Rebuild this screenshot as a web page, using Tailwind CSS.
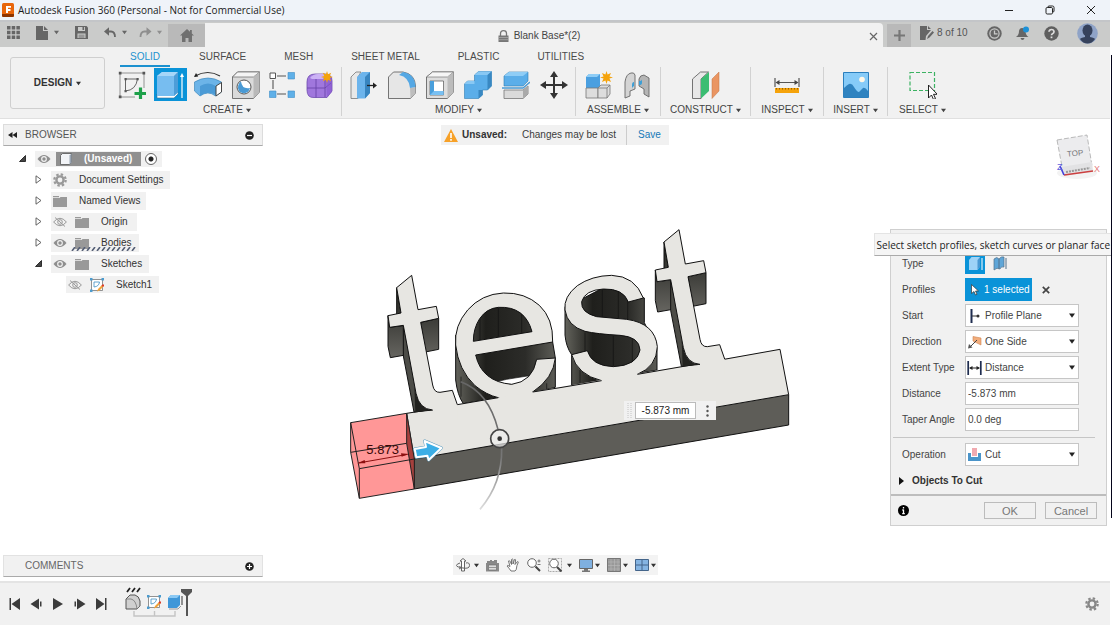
<!DOCTYPE html>
<html lang="en">
<head>
    <meta charset="UTF-8">
    <meta name="viewport" content="width=device-width, initial-scale=1.0">
    <title>Autodesk Fusion 360</title>
    <script src="https://cdn.jsdelivr.net/npm/@tailwindcss/browser@4"></script>
</head>
<body class="relative flex flex-col h-screen overflow-hidden bg-white pr-[2px] font-['Liberation_Sans',Arial,sans-serif] text-[10px] leading-3 text-[#3c3c3c]">

    <!-- Shared icons -->
    <svg class="hidden">
        <symbol id="caret" viewBox="0 0 6 5"><path d="M0 .5h6L3 4.700z" fill="currentColor"/></symbol>
        <symbol id="folder" viewBox="0 0 14 12"><path d="M0 1h6v1.200H0zM0 3h6.500l1-1H14v10H0z" fill="#999"/></symbol>
        <symbol id="eye" viewBox="0 0 14 10"><path d="M.5 5Q7-3 13.500 5 7 13 .5 5z" fill="#8e8e8e"/><circle cx="7" cy="5" r="2.900" fill="#f1f1f1"/><circle cx="7" cy="5" r="1.700" fill="#8e8e8e"/></symbol>
        <symbol id="eye-off" viewBox="0 0 14 10"><path d="M.6 5Q7-2.500 13.400 5 7 12.500.6 5z" fill="none" stroke="#999"/><circle cx="7" cy="5" r="2.300" fill="none" stroke="#999"/><path d="M2 .5l10 9" stroke="#999"/></symbol>
        <symbol id="closed" viewBox="0 0 7 9"><path d="M1 .8v7.400l5-3.700z" fill="#fff" stroke="#555" stroke-width=".9"/></symbol>
        <symbol id="opened" viewBox="0 0 7 7"><path d="M6.500.5v6h-6z" fill="#444" stroke="#111" stroke-width=".8"/></symbol>
        <symbol id="gear" viewBox="0 0 14 14"><circle cx="7" cy="7" r="5.700" fill="none" stroke="currentColor" stroke-width="2.200" stroke-dasharray="2.400 2.077"/><circle cx="7" cy="7" r="3.600" fill="none" stroke="currentColor" stroke-width="2.400"/></symbol>
        <symbol id="star" viewBox="0 0 12 12"><path d="M6 0l1 3.300L10.200 1.800 8.700 5 12 6 8.700 7l1.500 3.200L7 8.700 6 12 5 8.700 1.800 10.200 3.300 7 0 6l3.300-1L1.800 1.800 5 3.300z" fill="#f5a30b"/></symbol>
        <symbol id="sketch" viewBox="0 0 14 14"><path d="M1.500 1.500h11v11h-11z" fill="#fff" stroke="#777" stroke-width=".8"/><path d="M4 4h5.500Q9 8.500 4 9z" fill="none" stroke="#3c8fc5" stroke-width=".8"/><path d="M0 0h2.500v2.500H0zM11.500 0H14v2.500h-2.500zM0 11.500h2.500V14H0z" fill="#4c9ccf"/><path d="M7 13.500l1-2.500 4-4 1.500 1.500-4 4z" fill="#f1a33b"/><path d="M11.500 7.500L13 6l1.500 1.500L13 9z" fill="#d93a2b"/></symbol>
    </svg>

    <!-- Title bar -->
    <header class="flex items-center h-5 shrink-0 bg-[#eff3f9] pl-[2px] pr-[14px]">
        <svg class="w-3 h-[14px]" viewBox="0 0 12 14"><rect width="12" height="14" rx="1.500" fill="#e8660c"/><path d="M0 11h12v1.500Q12 14 10.500 14h-9Q0 14 0 12.500z" fill="#8d3400"/><path d="M4 10V3h5v1.800H6v1.300h2.500v1.800H6V10z" fill="#fff"/></svg>
        <h1 class="ml-1 font-['Open_Sans','Noto_Sans',sans-serif] text-[10px] text-[#1a1a1a] whitespace-nowrap">Autodesk Fusion 360 (Personal - Not for Commercial Use)</h1>
        <div class="ml-auto flex items-center gap-[31px] text-[#222]">
            <button aria-label="Minimize"><svg class="w-[10px] h-[10px]" viewBox="0 0 10 10"><path d="M1 5.500h8" stroke="currentColor"/></svg></button>
            <button aria-label="Restore"><svg class="w-[10px] h-[10px]" viewBox="0 0 10 10" fill="none" stroke="currentColor"><rect x="1" y="2.500" width="6.500" height="6.500" rx="1.200"/><path d="M3 2.500V2Q3 1 4 1h3.500Q9 1 9 2.500V6Q9 7 8 7"/></svg></button>
            <button aria-label="Close"><svg class="w-[10px] h-[10px]" viewBox="0 0 10 10"><path d="M1 1l8 8M9 1L1 9" stroke="currentColor"/></svg></button>
        </div>
    </header>

    <!-- Quick access and document tabs -->
    <div class="flex items-end h-[27px] shrink-0 bg-[#cacbca] border-t-2 border-[#c3c5c8] text-[#666]">
        <div class="flex items-center h-[25px] w-[168px] pl-[7px] pb-1">
            <button aria-label="Data panel"><svg class="w-[13px] h-[13px]" viewBox="0 0 13 13" fill="currentColor"><path d="M0 0h3.500v3.500H0zM4.700 0h3.500v3.500H4.700zM9.400 0h3.500v3.500H9.400zM0 4.700h3.500v3.500H0zM4.700 4.700h3.500v3.500H4.700zM9.400 4.700h3.500v3.500H9.400zM0 9.400h3.500v3.500H0zM4.700 9.400h3.500v3.500H4.700zM9.400 9.400h3.500v3.500H9.400z"/></svg></button>
            <button class="ml-4 flex items-center gap-[6px]" aria-label="File"><svg class="w-[12px] h-[14px]" viewBox="0 0 12 14"><path d="M0 0h7v5h5v9H0zM8 0l4 4H8z" fill="currentColor"/></svg><svg class="w-[5px] h-[5px]"><use href="#caret"/></svg></button>
            <button class="ml-4" aria-label="Save"><svg class="w-[13px] h-[13px]" viewBox="0 0 13 13"><path d="M0 0h11.500L13 1.500V13H0z" fill="currentColor"/><path d="M3 1h7v4H3zM2.500 7.500h8V12h-8z" fill="#cacbca"/><path d="M7.500 1h1.600v3H7.500zM3.500 8.700h6v.9h-6zM3.500 10.500h6v.9h-6z" fill="currentColor"/></svg></button>
            <button class="ml-4 flex items-center gap-[5px]" aria-label="Undo"><svg class="w-[13px] h-[11px]" viewBox="0 0 13 11"><path d="M0 4.500L5 .3v8.400z" fill="currentColor"/><path d="M4 4.500h3q4 .2 4 5.500" fill="none" stroke="currentColor" stroke-width="1.800"/></svg><svg class="w-[5px] h-[5px]"><use href="#caret"/></svg></button>
            <button class="ml-3 flex items-center gap-[5px] text-[#8f8f8f]" aria-label="Redo"><svg class="w-[13px] h-[11px]" viewBox="0 0 13 11"><path d="M12.500 4.500l-5-4.200v8.400z" fill="currentColor"/><path d="M8.500 4.500h-3q-4 .2-4 5.500" fill="none" stroke="currentColor" stroke-width="1.800"/></svg><svg class="w-[5px] h-[5px]"><use href="#caret"/></svg></button>
        </div>
        <button class="flex items-center justify-center w-[37px] h-[23px] bg-[#b9b9b9]" aria-label="Home"><svg class="w-[14px] h-[13px]" viewBox="0 0 14 13"><path d="M0 6.500L7 0l3 2.800V1h1.800v3.500L14 6.500H12V13H8.500V9h-3v4H2V6.500z" fill="#707070"/></svg></button>
        <div class="flex flex-1 items-center h-6 rounded-tr-sm bg-[#f1f1f1] pl-1 pr-[5px] pt-[2px]">
            <div class="flex flex-1 items-center justify-center gap-[5px] text-[#444]">
                <svg class="w-[11px] h-[12px]" viewBox="0 0 11 12"><path d="M2.500 6V3.500q0-2.800 3-2.800t3 2.800V6" fill="none" stroke="#777" stroke-width="1.300"/><path d="M.5 5.500h10V12H.5z" fill="#777"/><path d="M1 7.500h9M1 9.700h9" stroke="#aaa" stroke-width=".8"/></svg>
                <span>Blank Base*(2)</span>
            </div>
            <button aria-label="Close tab"><svg class="w-[9px] h-[9px]" viewBox="0 0 9 9"><path d="M1 1l7 7M8 1L1 8" stroke="#666" stroke-width="1.200"/></svg></button>
        </div>
        <button class="ml-1 flex items-center justify-center w-6 h-[23px] bg-[#b9b9b9]" aria-label="New tab"><svg class="w-[11px] h-[11px]" viewBox="0 0 11 11"><path d="M5.500 0v11M0 5.500h11" stroke="#777" stroke-width="2.200"/></svg></button>
        <div class="flex items-center h-[25px] w-[199px] pl-[9px] pr-3 pb-[3px]">
            <svg class="w-[14px] h-[14px]" viewBox="0 0 14 14"><path d="M0 0h7v4h4L6 10l-.5 4H0z" fill="currentColor"/><path d="M8 0l3 3H8zM7 13l1-3 4.500-5L14 6.500l-4.500 5z" fill="currentColor"/></svg>
            <span class="ml-[3px] text-[#555]">8 of 10</span>
            <div class="ml-auto flex items-center gap-[14px]">
                <button aria-label="Job status"><svg class="w-[15px] h-[15px]" viewBox="0 0 15 15"><circle cx="7.500" cy="7.500" r="7.200" fill="#666"/><circle cx="7.500" cy="7.500" r="4.600" fill="none" stroke="#cacbca" stroke-width="1.200"/><path d="M7.500 4.500v3.300h3" stroke="#cacbca" stroke-width="1.300" fill="none"/></svg></button>
                <button aria-label="Notifications"><svg class="w-[14px] h-[15px]" viewBox="0 0 14 15"><path d="M0 11q3-2 3-6Q3.500 2 6 2q3 0 3.500 3 0 4 3 6zM4.500 12h4q-.5 2-2 2t-2-2z" fill="#666"/><circle cx="10" cy="3.500" r="3" fill="#1c91d8"/></svg></button>
                <button aria-label="Help"><svg class="w-[15px] h-[15px]" viewBox="0 0 15 15"><circle cx="7.500" cy="7.500" r="7.200" fill="#5f5f5f"/><path d="M5 5.800Q5.200 3.500 7.500 3.500T10 5.700Q10 7 8.500 7.700q-1 .5-1 1.600" fill="none" stroke="#dcdcdc" stroke-width="1.700"/><path d="M6.600 10.500h1.800v1.700H6.600z" fill="#dcdcdc"/></svg></button>
                <button class="ml-1" aria-label="Account"><svg class="w-[21px] h-[21px]" viewBox="0 0 21 21"><circle cx="10.500" cy="10.500" r="10.300" fill="#8fa3c7"/><ellipse cx="10.500" cy="7.500" rx="5" ry="6" fill="#36425c"/><path d="M8 11h5v3q4.500.8 5 2-3 4.500-7.500 4.500T3 16q.5-1.200 5-2z" fill="#36425c"/></svg></button>
            </div>
        </div>
    </div>

    <!-- Ribbon -->
    <div class="flex h-[72px] shrink-0 bg-[#f1f1f1] border-b border-[#e0e0e0]">
        <button class="ml-[10px] mt-[10px] flex items-center justify-center gap-1 w-[95px] h-[52px] rounded-[3px] border border-[#cfcfcf] font-bold text-[#333]">DESIGN <svg class="w-[5px] h-[5px]"><use href="#caret"/></svg></button>
        <div class="ml-[8px] flex flex-col flex-1">
            <nav class="ml-[7px] flex gap-5 h-[20px] text-[#4a4a4a] whitespace-nowrap">
                <a href="#" class="px-[10px] pt-1 border-b-[2px] border-[#1c91cf] text-[#1c91cf]">SOLID</a>
                <a href="#" class="px-[9px] pt-1">SURFACE</a>
                <a href="#" class="px-[9px] pt-1">MESH</a>
                <a href="#" class="px-[9px] pt-1">SHEET METAL</a>
                <a href="#" class="px-[9px] pt-1">PLASTIC</a>
                <a href="#" class="px-[9px] pt-1">UTILITIES</a>
            </nav>
            <div class="flex text-[#444]">
                <section class="flex flex-col items-center gap-[2px] w-[229px] border-r border-[#d2d2d2]">
                    <div class="flex h-[35px] items-center">
                        <button class="flex justify-center w-[38px]" aria-label="Create sketch"><svg class="w-7 h-7" viewBox="0 0 28 28"><path d="M2 2h24v24H2z" fill="none" stroke="#888" stroke-width=".9"/><path d="M7.500 8h12Q18 19 7.500 20z" fill="none" stroke="#555" stroke-width=".9"/><path d="M.8.800h2.700v2.700H.8zM24.500.800h2.700v2.700h-2.700zM.8 24.500h2.700v2.700H.8zM6.500 7h2.200v2.200H6.500zM18.500 7h2.200v2.200h-2.200zM6.500 19h2.200v2.200H6.500z" fill="#555"/><path d="M17 17h11v11H17z" fill="#f1f1f1"/><path d="M22.500 16.500v12M16.500 22.500h12" stroke="#1ea04a" stroke-width="3.200"/></svg></button>
                        <button class="flex items-center justify-center w-[38px]" aria-label="Extrude"><span class="flex items-center justify-center w-[33px] h-[33px] bg-[#0a93d8]"><svg class="w-7 h-7" viewBox="0 0 28 28"><path d="M1 23v4h17l4-4v-2l-4 3H1z" fill="#fff" stroke="#3d6f96" stroke-width=".6"/><path d="M1 5l5-4h16v20l-4 4H1z" fill="#77bdf0"/><path d="M1 5l5-4h16l-4 4z" fill="#a6d6f8"/><path d="M18 5l4-4v20l-4 4z" fill="#4d9dd8"/><path d="M26 27V4" stroke="#fff" stroke-width="1.200"/><path d="M24 6l2-4 2 4z" fill="#fff"/></svg></span></button>
                        <button class="flex justify-center w-[38px]" aria-label="Revolve"><svg class="w-7 h-7" viewBox="0 0 28 28"><path d="M1 5Q14-2 26 5" fill="none" stroke="#333" stroke-width="1.200"/><path d="M0 6l2-4 2.200 3.500z" fill="#222"/><path d="M.500 11Q14 3 27.500 11v10l-6 4Q14 19 6 25L.5 20z" fill="#6cb4e8" stroke="#2f7db3" stroke-width=".6"/><path d="M6 15Q14 10 22 15v9Q14 19 6 25z" fill="#4b9bd6"/><path d="M22 15l5.500-3.500V21L22 25z" fill="#fff" stroke="#444"/></svg></button>
                        <button class="flex justify-center w-[38px]" aria-label="Hole"><svg class="w-7 h-7" viewBox="0 0 28 28"><path d="M.5 6l5-5h22v20l-6 6.500H.5z" fill="#dadada" stroke="#666" stroke-width=".9"/><path d="M.5 6l5-5h22l-6 5z" fill="#f4f4f4" stroke="#666" stroke-width=".7"/><path d="M21.500 6l6-5v20l-6 6.500z" fill="#b9b9b9"/><circle cx="12" cy="16" r="7" fill="#fff" stroke="#555"/><path d="M9 10.500q1 8 9 6.500-1 5-6 5.200Q6.500 22 6 17q0-5 3-6.500z" fill="#4a9ad4"/></svg></button>
                        <button class="flex justify-center w-[38px] pr-1" aria-label="Pattern"><svg class="w-7 h-7" viewBox="0 0 28 28"><path d="M9 5h9M5 9v9M9 23h9" fill="none" stroke="#555" stroke-width="1.100"/><path d="M2 2h5.500v5.500H2z" fill="#fff" stroke="#555"/><path d="M20 1.500h6.500V8H20zM1.500 20H8v6.500H1.500zM20 20h6.500v6.500H20z" fill="#5fb0e8" stroke="#3f8fc8" stroke-width=".6"/></svg></button>
                        <button class="flex justify-center w-[38px] pr-1" aria-label="Create form"><svg class="w-7 h-7" viewBox="0 0 28 28"><path d="M1 11Q1 3 9 3h10q7 0 7 7v10l-5 6.500H8Q1 27 1 19z" fill="#a077dd" stroke="#6f4cae" stroke-width=".8"/><path d="M4 7q3-4 8-4h8l-3 5H6z" fill="#ccb2f5"/><path d="M10 8v18.500M1 17h18l6-5M19 8v18" fill="none" stroke="#6b46ab" stroke-width=".9"/><path d="M20 9l6-3v15l-5 5z" fill="#8657cf" opacity=".6"/><use href="#star" x="15" y="0" width="12" height="12"/></svg></button>
                    </div>
                    <button class="flex items-center gap-[3px]">CREATE <svg class="w-[5px] h-[5px]"><use href="#caret"/></svg></button>
                </section>
                <section class="flex flex-col items-center gap-[2px] w-[234px] border-r border-[#d2d2d2]">
                    <div class="flex h-[35px] items-center">
                        <button class="flex justify-center w-[38px]" aria-label="Press pull"><svg class="w-7 h-7" viewBox="0 0 28 28"><path d="M1 6l5-5h5L8 6v21.500H1z" fill="#e8e8e8" stroke="#777" stroke-width=".8"/><path d="M7 6l5-5h8v21l-5 5.500H7z" fill="#6cb4ec"/><path d="M15 6l5-5v21l-5 5.500z" fill="#3885c0"/><path d="M17 14.500h8" stroke="#222" stroke-width="1.300"/><path d="M23 11.500l4 3-4 3z" fill="#222"/></svg></button>
                        <button class="flex justify-center w-[38px]" aria-label="Fillet"><svg class="w-7 h-7" viewBox="0 0 28 28"><path d="M.5 27.500V6l5-5H15q12 2 12.500 14v7l-5 5.500z" fill="#e6e6e6" stroke="#666" stroke-width=".9"/><path d="M22 17l5.500-1v6l-5 5.500z" fill="#bdbdbd"/><path d="M11 4l4-3q12 2 12.500 15L22 17Q21 6 11 4z" fill="#55a8e4"/></svg></button>
                        <button class="flex justify-center w-[38px]" aria-label="Shell"><svg class="w-7 h-7" viewBox="0 0 28 28"><path d="M.5 6l6-5h21v20l-6 6.500H.5z" fill="#ddd" stroke="#666" stroke-width=".9"/><path d="M.5 6l6-5h21l-6 5z" fill="#f6f6f6" stroke="#666" stroke-width=".6"/><path d="M21.500 6l6-5v20l-6 6.500z" fill="#bcbcbc"/><path d="M4 10h13.500v14H4z" fill="#fff" stroke="#555" stroke-width=".7"/><path d="M4 10h4v10h9.500v4H4z" fill="#4a9fdc"/><path d="M4 24l4-4h9.500v4z" fill="#79c0f2"/></svg></button>
                        <button class="flex justify-center w-[38px]" aria-label="Combine"><svg class="w-7 h-7" viewBox="0 0 28 28"><path d="M.5 13l3-3h7V4l4-3.500h13V15l-4 4h-5v5l-4 3.500H.5z" fill="#5baee9" stroke="#2f7db3" stroke-width=".6"/><path d="M10.500 4l4-3.500h13l-4 3.500zM.500 13l3-3h7v3z" fill="#88c8f4"/><path d="M23.500 4l4-3.500V15l-4 4zM14.500 19h4v5l-4 3.500z" fill="#3988c2"/></svg></button>
                        <button class="flex justify-center w-[38px]" aria-label="Split body"><svg class="w-7 h-7" viewBox="0 0 28 28"><path d="M2 5l5-4h19v9l-5 5H2z" fill="#5baee9" stroke="#2f7db3" stroke-width=".6"/><path d="M2 5l5-4h19l-5 4z" fill="#8fcdf6"/><path d="M0 17h21l7-6" fill="none" stroke="#4a9ad4" stroke-width="1.400"/><path d="M2 19h19l5-4v8l-5 4.500H2z" fill="#dadada" stroke="#777" stroke-width=".8"/><path d="M21 19l5-4v8l-5 4.500z" fill="#aaa"/></svg></button>
                        <button class="flex justify-center w-[38px]" aria-label="Move"><svg class="w-7 h-7" viewBox="0 0 28 28"><path d="M14 4v20M4 14h20" stroke="#333" stroke-width="2"/><path d="M14 0l4 6h-8zM14 28l4-6h-8zM0 14l6-4v8zM28 14l-6-4v8z" fill="#333"/></svg></button>
                    </div>
                    <button class="flex items-center gap-[3px]">MODIFY <svg class="w-[5px] h-[5px]"><use href="#caret"/></svg></button>
                </section>
                <section class="flex flex-col items-center gap-[2px] w-[85px] border-r border-[#d2d2d2]">
                    <div class="flex h-[35px] items-center">
                        <button class="flex justify-center w-[38px]" aria-label="New component"><svg class="w-7 h-7" viewBox="0 0 28 28"><path d="M1 6l3-3h11v12l-3 3H1z" fill="#4a9fe0"/><path d="M1 6l3-3h11l-3 3z" fill="#8fcdf6"/><path d="M1 17h12v10H1z" fill="#ddd" stroke="#777" stroke-width=".8"/><path d="M13 17l3-3h9v9l-3 4h-9z" fill="#ddd" stroke="#777" stroke-width=".8"/><path d="M13 17h9v10M22 17l3-3" fill="none" stroke="#777" stroke-width=".8"/><use href="#star" x="15" y="0" width="13" height="13"/></svg></button>
                        <button class="flex justify-center w-[38px]" aria-label="Joint"><svg class="w-7 h-7" viewBox="0 0 28 28"><path d="M2 27V11Q3 3 8 2q3-1 4 2v14L7 20v5z" fill="#d4d4d4" stroke="#666" stroke-width=".9"/><path d="M16 8q1-4 5-4l5 3v19l-5-3v-5l-5-3z" fill="#b5b5b5" stroke="#666" stroke-width=".9"/><path d="M9 14q0-3 2-3v4q-2 1-2 3zM16 10q3 0 3-2v4q0 2-3 2z" fill="#3d9fd6"/></svg></button>
                    </div>
                    <button class="flex items-center gap-[3px]">ASSEMBLE <svg class="w-[5px] h-[5px]"><use href="#caret"/></svg></button>
                </section>
                <section class="flex flex-col items-center gap-[2px] w-[90px] border-r border-[#d2d2d2]">
                    <div class="flex h-[35px] items-center">
                        <button aria-label="Offset plane"><svg class="w-7 h-7" viewBox="0 0 28 28"><path d="M.5 8l8-7h8L9 8v19.500H.5z" fill="#e8e8e8" stroke="#666" stroke-width=".9"/><path d="M9 8l8-7v19l-8 7.500z" fill="#3bbd72"/><path d="M20 8l7-7v19l-7 7.500z" fill="#ea9562" stroke="#c27546" stroke-width=".5"/></svg></button>
                    </div>
                    <button class="flex items-center gap-[3px]">CONSTRUCT <svg class="w-[5px] h-[5px]"><use href="#caret"/></svg></button>
                </section>
                <section class="flex flex-col items-center gap-[2px] w-[73px] border-r border-[#d2d2d2]">
                    <div class="flex h-[35px] items-center">
                        <button aria-label="Measure"><svg class="w-7 h-7" viewBox="0 0 28 28"><path d="M2 7v9M26 7v9M4 11.500h20" stroke="#555" stroke-width="1.200"/><path d="M2.500 11.500l4-2.500v5zM25.500 11.500l-4-2.500v5z" fill="#444"/><path d="M2 17h24v5H2z" fill="#f5a30b"/><path d="M3 17.700h23" stroke="#9a6200" stroke-width="1.500" stroke-dasharray="1 2"/></svg></button>
                    </div>
                    <button class="flex items-center gap-[3px]">INSPECT <svg class="w-[5px] h-[5px]"><use href="#caret"/></svg></button>
                </section>
                <section class="flex flex-col items-center gap-[2px] w-[64px] border-r border-[#d2d2d2]">
                    <div class="flex h-[35px] items-center">
                        <button aria-label="Insert image"><svg class="w-7 h-7" viewBox="0 0 28 28"><path d="M1.500 1.500h25v25h-25z" fill="#86cbf8" stroke="#2b7fbd"/><circle cx="20" cy="8.500" r="2.800" fill="#fff8e8"/><path d="M2 26V17Q5 14 7 13q3-1 5 3 3 5 5 5l4-4q2-1 5 3v6z" fill="#2f83c0"/></svg></button>
                    </div>
                    <button class="flex items-center gap-[3px]">INSERT <svg class="w-[5px] h-[5px]"><use href="#caret"/></svg></button>
                </section>
                <section class="flex flex-col items-center gap-[2px] w-[69px]">
                    <div class="flex h-[35px] items-center">
                        <button aria-label="Select"><svg class="w-7 h-7" viewBox="0 0 28 28"><path d="M1 1.500h24.500v18H1z" fill="none" stroke="#3bb262" stroke-width="1.200" stroke-dasharray="4 2"/><path d="M19.500 14v13l3-3 2 4.500 2-1-2-4.200h3.800z" fill="#fff" stroke="#222"/></svg></button>
                    </div>
                    <button class="flex items-center gap-[3px]">SELECT <svg class="w-[5px] h-[5px]"><use href="#caret"/></svg></button>
                </section>
            </div>
        </div>
    </div>

    <!-- Canvas -->
    <main class="relative flex-1">
        <!-- Model -->
        <svg class="absolute left-[340px] top-[101px] w-[460px] h-[300px]" viewBox="0 0 1380 900" stroke-linejoin="round">
            <defs>
                <linearGradient id="side" x1="0" x2="0" y1="0" y2="1"><stop offset="0" stop-color="#25251f"/><stop offset=".5" stop-color="#40403c"/><stop offset="1" stop-color="#666560"/></linearGradient>
                <linearGradient id="round" x1="0" x2="1" y1="0" y2="0"><stop offset="0" stop-color="#63635c"/><stop offset=".3" stop-color="#1f1f1c"/><stop offset=".7" stop-color="#2c2c29"/><stop offset="1" stop-color="#5c5c56"/></linearGradient>
                <linearGradient id="fade" x1="0" x2="0" y1="0" y2="1"><stop offset="0" stop-color="#666"/><stop offset=".6" stop-color="#777"/><stop offset="1" stop-color="#ddd"/></linearGradient>
                <g id="letter-t">
                    <path d="M170 203l13 76-13 3zM144 287v92l7 34 45-8V316l-47 6zM242 307l54-12v93l-40 8z" fill="url(#side)" stroke="#111" stroke-width="3"/>
                    <path d="M190 316v92l32 168 56-6-40-20z" fill="#4c4c47" stroke="#111" stroke-width="3"/>
                    <path d="M223 500l3 76 52-6Q235 570 223 500z" fill="#22221f"/>
                    <path d="M352 554L337 511 300 517Q282 518 278 495L242 307 296 295 289 259 234 269 215 166 170 203 183 279 144 287 149 322 190 316 228 520Q238 568 278 570V600H352z" fill="#e7e6e2"/>
                    <path d="M352 554L337 511 300 517Q282 518 278 495L242 307 296 295 289 259 234 269 215 166 170 203 183 279 144 287 149 322 190 316 228 520Q238 568 278 570" fill="none" stroke="#111" stroke-width="3"/>
                </g>
            </defs>
            <!-- e -->
            <path d="M347 345V480Q352 525 370 551L475 533 590 516 646 502V414L638 366 600 275 490 240 400 260z" fill="url(#round)"/>
            <path d="M347 345V480Q352 525 370 551L475 533M590 516L646 502V414L638 366" fill="none" stroke="#111" stroke-width="3"/>
            <path d="M462 487L500 478 562 468 572 474Q545 498 505 493z" fill="#fff" stroke="#111" stroke-width="2"/>
            <path d="M420 275V360M475 255V350M545 265V338M363 470V530M620 490V508" stroke="#111" stroke-width="2"/>
            <path d="M638 366Q640 295 598 256 555 217 490 219 425 222 383 270 342 318 347 375 355 450 405 497 440 525 475 533L530 560 578 516Q640 475 646 414L590 418Q578 485 515 493 425 485 407 405zM400 364Q400 325 419 296 440 265 475 262 555 258 576 335z" fill="#e7e6e2" fill-rule="evenodd" stroke="#111" stroke-width="3"/>
            <!-- s -->
            <g transform="translate(660 0)">
                <path d="M15 260V345Q18 380 35 404V496L125 482 291 450V385L253 308V234L155 190 60 240z" fill="url(#round)" stroke="#111" stroke-width="3"/>
                <path d="M127 200V290M175 200V294M75 338V410M160 348V445M217 358V430M203 235V298M60 450V490" stroke="#111" stroke-width="2"/>
                <path d="M250 234Q225 168 155 166 95 167 52 197 10 230 15 270 22 318 75 334 110 342 180 346 238 350 240 390 232 437 160 440 95 438 82 392L35 404Q52 465 125 482L180 520 232 463Q290 440 292 380 285 310 200 298 155 294 110 290 62 278 65 245 75 210 130 207 190 205 205 246z" fill="#e7e6e2" stroke="#111" stroke-width="3"/>
            </g>
            <!-- bar -->
            <path d="M200 580L1320 388 1346 524 223 717z" fill="#e7e6e2"/>
            <path d="M223 717L1346 524V615L223 807z" fill="#5e5d58" stroke="#111" stroke-width="3"/>
            <path d="M200 580L278 568M352 554L475 533M578 516L660 503 785 482M892 463L1078 431M1152 418L1320 388 1346 524" fill="none" stroke="#111" stroke-width="3"/>
            <use href="#letter-t"/>
            <use href="#letter-t" x="802" y="-137"/>
            <!-- removed volume -->
            <path d="M32 608L200 580 223 717V807L58 835 32 697z" fill="#ff9797" stroke="#222" stroke-width="3"/>
            <path d="M200 580L223 717V807L200 670z" fill="#a5403d" stroke="#222" stroke-width="3"/>
            <path d="M32 608L58 746V835M58 746L223 717M32 697L200 670" fill="none" stroke="#222" stroke-width="3"/>
            <path d="M55 729L203 703" stroke="#8d1010" stroke-width="3"/>
            <path d="M52 730l22-10 2 10zM206 702l-23-2 2 10z" fill="#8d1010"/>
            <text x="79" y="701" font-size="39" fill="#3c0808">5.873</text>
            <!-- manipulators -->
            <path d="M224 687L258 681 254 663 304 684 266 720 262 707 229 712z" fill="#3caee6" stroke="#5d9cbd" stroke-width="9"/>
            <path d="M224 687L258 681 254 663 304 684 266 720 262 707 229 712z" fill="#3caee6" stroke="#fff" stroke-width="6"/>
            <path d="M362 485Q445 515 474 628M485 685Q487 790 420 868" fill="none" stroke="url(#fade)" stroke-width="5"/>
            <circle cx="479" cy="656" r="27" fill="#eee" fill-opacity=".7" stroke="#444" stroke-width="5"/>
            <circle cx="479" cy="656" r="7" fill="#333"/>
        </svg>

        <!-- Floating value input -->
        <div class="absolute left-[624px] top-[282px] flex items-center gap-[3px] h-[19px] bg-[#f1f1f1] pl-[3px]">
            <svg class="w-[5px] h-[15px]" viewBox="0 0 5 15"><path d="M1 0v15M4 0v15" stroke="#c4c4c4" stroke-dasharray="1 1"/></svg>
            <input aria-label="Distance value" class="w-[61px] h-[17px] bg-white border border-[#bbb] text-center text-[10px] text-[#222]" value="-5.873 mm">
            <button class="flex justify-center w-[17px]" aria-label="More"><svg class="w-[3px] h-[12px]" viewBox="0 0 3 12" fill="#555"><circle cx="1.500" cy="1.500" r="1.200"/><circle cx="1.500" cy="6" r="1.200"/><circle cx="1.500" cy="10.500" r="1.200"/></svg></button>
        </div>

        <!-- Browser tree -->
        <aside class="absolute left-[3px] top-[5px] w-[260px]">
            <div class="flex items-center h-[22px] bg-[#f1f1f1] border border-[#dcdcdc] border-b-[#aaa] px-1 text-[#555]">
                <svg class="w-[9px] h-[6px]" viewBox="0 0 9 6"><path d="M4.500 0v6L0 3zM9 0v6L4.500 3z" fill="#222"/></svg>
                <span class="ml-2">BROWSER</span>
                <button class="ml-auto mr-1" aria-label="Collapse"><svg class="w-[9px] h-[9px]" viewBox="0 0 9 9"><circle cx="4.500" cy="4.500" r="4.300" fill="#222"/><path d="M2 4.500h5" stroke="#fff" stroke-width="1.200"/></svg></button>
            </div>
            <ul class="mt-[2px] flex flex-col text-[#333] *:flex *:items-center *:h-[21px]">
                <li class="pl-4"><svg class="w-[7px] h-[7px]"><use href="#opened"/></svg>
                    <div class="ml-[9px] flex items-center h-4 bg-[#f1f1f1] pl-[2px] pr-[5px]"><svg class="w-[14px] h-[10px]"><use href="#eye"/></svg>
                        <span class="ml-[5px] mr-1 flex items-center w-[85px] h-[14px] bg-[#909090] pl-1 font-bold text-white"><svg class="mr-3 w-3 h-3" viewBox="0 0 12 12"><path d="M.5 2.500l2-2h9v9l-2 2h-9z" fill="#f2f4f7" stroke="#555" stroke-width=".8"/><path d="M9.500 2.500l2-2v9l-2 2z" fill="#9aa5b3"/></svg>(Unsaved)</span>
                        <input type="radio" checked aria-label="Activate component" class="appearance-none w-3 h-3 rounded-full border border-[#666] bg-[radial-gradient(circle,#222_0_2px,#fff_3px)]"></div></li>
                <li class="pl-8"><svg class="w-[7px] h-[9px]"><use href="#closed"/></svg>
                    <div class="ml-[9px] flex items-center h-[18px] bg-[#f1f1f1] pl-[2px] pr-[6px]"><svg class="mr-3 w-[14px] h-[14px] text-[#999]"><use href="#gear"/></svg>Document Settings</div></li>
                <li class="pl-8"><svg class="w-[7px] h-[9px]"><use href="#closed"/></svg>
                    <div class="ml-[9px] flex items-center h-[18px] bg-[#f1f1f1] pl-[2px] pr-[5px]"><svg class="mr-3 w-[14px] h-3"><use href="#folder"/></svg>Named Views</div></li>
                <li class="pl-8"><svg class="w-[7px] h-[9px]"><use href="#closed"/></svg>
                    <div class="ml-[9px] flex items-center h-[18px] bg-[#f1f1f1] pl-[2px] pr-[9px]"><svg class="w-[14px] h-[10px]"><use href="#eye-off"/></svg><svg class="ml-2 mr-3 w-[14px] h-3"><use href="#folder"/></svg>Origin</div></li>
                <li class="pl-8"><svg class="w-[7px] h-[9px]"><use href="#closed"/></svg>
                    <div class="relative ml-[9px] flex items-center h-[18px] bg-[#f1f1f1] pl-[2px] pr-[7px]"><svg class="w-[14px] h-[10px]"><use href="#eye"/></svg><svg class="ml-2 mr-3 w-[14px] h-3"><use href="#folder"/></svg>Bodies
                        <svg class="absolute left-5 bottom-[1px] w-[68px] h-1" viewBox="0 0 68 4"><path d="M1 4l3-4M6 4l3-4M11 4l3-4M16 4l3-4M21 4l3-4M26 4l3-4M31 4l3-4M36 4l3-4M41 4l3-4M46 4l3-4M51 4l3-4M56 4l3-4M61 4l3-4" stroke="#566077" stroke-width="1.600"/></svg></div></li>
                <li class="pl-8"><svg class="w-[7px] h-[7px]"><use href="#opened"/></svg>
                    <div class="ml-[9px] flex items-center h-[18px] bg-[#f1f1f1] pl-[2px] pr-[7px]"><svg class="w-[14px] h-[10px]"><use href="#eye"/></svg><svg class="ml-2 mr-3 w-[14px] h-3"><use href="#folder"/></svg>Sketches</div></li>
                <li class="pl-[63px]">
                    <div class="flex items-center h-[17px] bg-[#f1f1f1] pl-[2px] pr-[7px]"><svg class="w-[14px] h-[10px]"><use href="#eye-off"/></svg><svg class="ml-2 mr-3 w-[14px] h-[14px]"><use href="#sketch"/></svg>Sketch1</div></li>
            </ul>
        </aside>

        <!-- Unsaved notice -->
        <div class="absolute left-[441px] top-[6px] flex items-center h-5 bg-[#f1f1f1] pl-[3px] whitespace-nowrap">
            <svg class="w-[14px] h-[13px]" viewBox="0 0 14 13"><path d="M7 0l7 13H0z" fill="#f7a128"/><path d="M7 4v5M7 10v1.700" stroke="#fff" stroke-width="1.600"/></svg>
            <b class="ml-1 text-[#333]">Unsaved:</b>
            <span class="ml-[15px]">Changes may be lost</span>
            <a href="#" class="ml-[10px] flex items-center h-5 border-l border-[#ccc] pl-[11px] pr-[8px] text-[#1579b8]">Save</a>
        </div>

        <!-- View cube -->
        <svg class="absolute right-[9px] top-[14px] w-[46px] h-[50px]" viewBox="0 0 46 50">
            <ellipse cx="22" cy="40" rx="20" ry="6" fill="#f3f3f3"/>
            <path d="M2 7L32 2 37 33 8 39z" fill="#ececee" stroke="#aaa" stroke-width=".8" stroke-dasharray="5 2"/>
            <path d="M6 34L37 29 38 38 10 43z" fill="#e2e2e4"/>
            <path d="M11 39L35 35" stroke="#999" stroke-width="2" stroke-dasharray="2 1"/>
            <text x="12" y="23" font-size="8" fill="#77777a" transform="rotate(-6 20 20)">TOP</text>
            <path d="M9 42L38 38" stroke="#cc4040" stroke-width="1.400"/><path d="M5 33L9 42" stroke="#4141dd" stroke-width="1.600"/>
            <text x="39" y="39" font-size="9" fill="#e58080">X</text><text x="2" y="37" font-size="9" fill="#6060dd">Z</text>
        </svg>

        <!-- Extrude dialog -->
        <form class="absolute right-[3px] top-[110px] w-[217px] bg-[#f1f1f1] border border-[#cfcfcf] pt-[22px] text-[#444]">
            <div class="flex flex-col gap-[3px] pl-[11px] *:flex *:items-center *:h-[23px]">
                <div><span class="w-[63px]">Type</span>
                    <button type="button" class="flex items-center justify-center w-[20px] h-[20px] bg-[#0a93d8]" aria-label="Extrude"><svg class="w-[15px] h-[15px]" viewBox="0 0 15 15"><path d="M1 4l2.500-3H12v9.500L9.500 14H1z" fill="#9ed3f7"/><path d="M9.500 4L12 1v9.500L9.500 14z" fill="#4a9ad4"/><path d="M14 14V2" stroke="#fff"/></svg></button>
                    <button type="button" class="ml-2" aria-label="Thin extrude"><svg class="w-[14px] h-[15px]" viewBox="0 0 14 15"><path d="M1 3q3-3 5 0 2-3 5-2v10q-3-1-4 2-3-2-6 1z" fill="#5fa6d8" stroke="#54718a" stroke-width=".7"/><path d="M6 3v10M13 13V2" stroke="#54718a"/></svg></button></div>
                <div><span class="w-[63px]">Profiles</span>
                    <button type="button" class="flex items-center h-[23px] w-[67px] bg-[#0a93d8] pl-[6px] text-white whitespace-nowrap"><svg class="mr-[5px] w-2 h-3" viewBox="0 0 8 12"><path d="M.5.5v9L3 7.500 4.500 11l1.500-.7L4.500 7h3z" fill="#fff" stroke="#333" stroke-width=".7"/></svg>1 selected</button>
                    <button type="button" class="ml-[10px]" aria-label="Clear"><svg class="w-2 h-2" viewBox="0 0 8 8"><path d="M.8.800l6.400 6.400M7.200.8L.8 7.200" stroke="#444" stroke-width="1.700"/></svg></button></div>
                <div><label for="start" class="w-[63px]">Start</label>
                    <span class="relative flex items-center w-[114px]"><select id="start" class="appearance-none w-full h-[23px] bg-white border border-[#c6c6c6] pl-[19px] text-[10px]"><option>Profile Plane</option></select>
                        <svg class="absolute left-[5px] w-[10px] h-[14px]" viewBox="0 0 10 14"><path d="M1.500 0v14" stroke="#1f2d50" stroke-width="2"/><path d="M2 7h6" stroke="#333"/><circle cx="8" cy="7" r="1.500" fill="#333"/></svg>
                        <svg class="absolute right-1 w-[6px] h-[5px] text-[#222]"><use href="#caret"/></svg></span></div>
                <div><label for="direction" class="w-[63px]">Direction</label>
                    <span class="relative flex items-center w-[114px]"><select id="direction" class="appearance-none w-full h-[23px] bg-white border border-[#c6c6c6] pl-[19px] text-[10px]"><option>One Side</option></select>
                        <svg class="absolute left-[3px] w-[14px] h-[14px]" viewBox="0 0 14 14"><path d="M5 1.500L13 3v7L5 6z" fill="#f2ad7c" stroke="#cf8350" stroke-width=".6"/><path d="M9 5L2 12" stroke="#444"/><path d="M0 13.500l1-4.500 3.500 3.500z" fill="#555"/></svg>
                        <svg class="absolute right-1 w-[6px] h-[5px] text-[#222]"><use href="#caret"/></svg></span></div>
                <div><label for="extent" class="w-[63px]">Extent Type</label>
                    <span class="relative flex items-center w-[114px]"><select id="extent" class="appearance-none w-full h-[23px] bg-white border border-[#c6c6c6] pl-[19px] text-[10px]"><option>Distance</option></select>
                        <svg class="absolute left-[2px] w-[15px] h-[14px]" viewBox="0 0 15 14"><path d="M1.200 0v14M13.800 0v14" stroke="#1f2d50" stroke-width="1.700"/><path d="M3 7h9" stroke="#222"/><path d="M2 7l3.500-2v4zM13 7L9.500 5v4z" fill="#222"/></svg>
                        <svg class="absolute right-1 w-[6px] h-[5px] text-[#222]"><use href="#caret"/></svg></span></div>
                <div><label for="distance" class="w-[63px]">Distance</label>
                    <input id="distance" class="w-[114px] h-[23px] bg-white border border-[#c6c6c6] px-[2px] text-[10px]" value="-5.873 mm"></div>
                <div><label for="taper" class="w-[63px]">Taper Angle</label>
                    <input id="taper" class="w-[114px] h-[23px] bg-white border border-[#c6c6c6] px-[2px] text-[10px]" value="0.0 deg"></div>
            </div>
            <hr class="mt-[6px] ml-[2px] mr-[11px] border-[#c6c6c6]">
            <div class="mt-[5px] flex items-center pl-[11px]"><label for="operation" class="w-[63px]">Operation</label>
                <span class="relative flex items-center w-[114px]"><select id="operation" class="appearance-none w-full h-[23px] bg-white border border-[#c6c6c6] pl-[19px] text-[10px]"><option>Cut</option></select>
                    <svg class="absolute left-[3px] w-[13px] h-[13px]" viewBox="0 0 13 13"><path d="M0 5h3v4h7V5h3v8H0z" fill="#4a94c9"/><path d="M4 0h5v8H4z" fill="#f1aab0"/></svg>
                    <svg class="absolute right-1 w-[6px] h-[5px] text-[#222]"><use href="#caret"/></svg></span></div>
            <button type="button" class="mt-[9px] mb-[7px] ml-2 flex items-center gap-2 font-bold text-[#333]"><svg class="w-[5px] h-2" viewBox="0 0 5 8"><path d="M0 0v8l5-4z" fill="#111"/></svg>Objects To Cut</button>
            <div class="flex items-center h-[31px] border-t-2 border-[#bdbdbd] pl-[7px] pr-[9px]">
                <svg class="w-[11px] h-[11px]" viewBox="0 0 11 11"><circle cx="5.500" cy="5.500" r="5.500" fill="#000"/><path d="M5.500 2v1.600M5.500 4.500v4.300M4.300 5h1.200M4.200 8.600h2.600" stroke="#fff" stroke-width="1.300"/></svg>
                <button type="button" class="ml-auto w-[52px] h-[17px] border border-[#bcbcbc] text-[11px] text-[#777]">OK</button>
                <button type="button" class="ml-[9px] w-[52px] h-[17px] border border-[#bcbcbc] text-[11px] text-[#777]">Cancel</button>
            </div>
        </form>
        <div role="tooltip" class="absolute -right-[2px] top-[114px] flex items-center h-[23px] bg-[#f5f5f5] border border-r-0 border-[#e4e4e4] border-b-[#aaa] px-[2px] font-['Open_Sans','Noto_Sans',sans-serif] text-[10px] text-[#222] whitespace-nowrap">Select sketch profiles, sketch curves or planar face</div>

        <!-- Comments -->
        <div class="absolute left-[3px] bottom-[4px] flex items-center w-[260px] h-[22px] bg-[#f1f1f1] border border-[#e2e2e2] border-b-[#aaa] pl-[21px] pr-2 text-[#666]">
            COMMENTS
            <button class="ml-auto" aria-label="Add comment"><svg class="w-[9px] h-[9px]" viewBox="0 0 9 9"><circle cx="4.500" cy="4.500" r="4.300" fill="#222"/><path d="M2 4.500h5M4.500 2v5" stroke="#fff" stroke-width="1.200"/></svg></button>
        </div>

        <!-- Navigation bar -->
        <div class="absolute left-[453px] bottom-[6px] flex items-center justify-between w-[205px] h-5 bg-[#f3f3f3] pl-[3px] pr-[2px] text-[#333]">
            <button class="flex items-center gap-1" aria-label="Orbit"><svg class="w-[14px] h-[14px]" viewBox="0 0 14 14" fill="none" stroke="#666"><path d="M5.500 13V3H4l3-2.500L10 3H8.500v10z" fill="#fff"/><path d="M4 5Q.5 6 .5 7.500T7 10t6.500-2.500T10 5M3 11L5 9.800 3.500 8"/></svg><svg class="w-[5px] h-[5px]"><use href="#caret"/></svg></button>
            <button aria-label="Look at"><svg class="w-[13px] h-[13px]" viewBox="0 0 13 13"><path d="M0 4h13v8.500H0z" fill="#8a8a8a"/><path d="M1 4V2h3V1h2v1h2V1h3v3z" fill="#888"/><path d="M2.500 6h8v5h-8z" fill="#ddd" stroke="#666" stroke-width=".6"/><path d="M3 8.500h7" stroke="#666" stroke-width=".6"/></svg></button>
            <button aria-label="Pan"><svg class="w-[14px] h-[14px]" viewBox="0 0 14 14"><path d="M5 13Q3 10 1 8q0-1.500 3 .5L2.500 3Q3.500 2 4.500 4L5.500 6.500V1.500Q6.500.5 7 1.500V6l1.500-4.500Q9.500 1 9.600 2L9 6.500 11.500 3.500Q12.700 3.500 12 5 10.500 8 10.500 10T9 13z" fill="#fff" stroke="#666" stroke-width=".9"/></svg></button>
            <button aria-label="Zoom"><svg class="w-[14px] h-[14px]" viewBox="0 0 14 14" fill="none" stroke="#666"><circle cx="5" cy="5" r="4.300" fill="#fff"/><path d="M8.500 8.500L13 13" stroke="#444" stroke-width="2"/><path d="M10.500 3h3M12 1.500v3M10.500 6.500h3" stroke-width=".9"/></svg></button>
            <button class="flex items-center gap-1" aria-label="Fit"><svg class="w-[15px] h-[14px]" viewBox="0 0 15 14" fill="none" stroke="#666"><path d="M.5.5h13v13H.5z" stroke="#aaa" stroke-dasharray="2 1"/><circle cx="6" cy="5.500" r="4.300" fill="#fff"/><path d="M9 9l4.500 4.500" stroke="#444" stroke-width="2"/></svg><svg class="w-[5px] h-[5px]"><use href="#caret"/></svg></button>
            <button class="flex items-center gap-[2px]" aria-label="Display settings"><svg class="w-[14px] h-[13px]" viewBox="0 0 14 13"><path d="M.5.5h13v9H.5z" fill="#7fb0e0" stroke="#666"/><path d="M5 10h4v1.500h2V13H3v-1.500h2z" fill="#777"/></svg><svg class="w-[5px] h-[5px]"><use href="#caret"/></svg></button>
            <button class="flex items-center gap-[2px]" aria-label="Grid"><svg class="w-[14px] h-[14px]" viewBox="0 0 14 14"><path d="M.5.5h13v13H.5z" fill="#999" stroke="#777"/><path d="M1 4h12M1 7.500h12M1 11h12M4 1v12M7.500 1v12M11 1v12" stroke="#bbb" stroke-width=".6"/></svg><svg class="w-[5px] h-[5px]"><use href="#caret"/></svg></button>
            <button class="flex items-center gap-[2px]" aria-label="Viewports"><svg class="w-[14px] h-[12px]" viewBox="0 0 14 12"><path d="M.5.5h13v11H.5z" fill="#85b4e2" stroke="#44658a"/><path d="M7 0v12M0 6h14" stroke="#44658a"/></svg><svg class="w-[5px] h-[5px]"><use href="#caret"/></svg></button>
        </div>
    </main>

    <!-- Timeline -->
    <footer class="flex items-center h-[44px] shrink-0 bg-[#f1f1f1] border-t-2 border-[#e4e4e4] pl-[9px] pr-[11px] text-[#3c3c3c]">
        <div class="flex items-center gap-[9px]">
            <button aria-label="Start"><svg class="w-3 h-3" viewBox="0 0 12 12" fill="currentColor"><path d="M.5 0H2v12H.5zM11 0v12L2.500 6z"/></svg></button>
            <button aria-label="Step back"><svg class="w-[13px] h-3" viewBox="0 0 13 12" fill="currentColor"><path d="M9 .5v11L.5 6zM10 3.500h1.500v5H10z"/></svg></button>
            <button aria-label="Play"><svg class="w-3 h-3" viewBox="0 0 12 12" fill="currentColor"><path d="M1 0v12l10-6z"/></svg></button>
            <button aria-label="Step forward"><svg class="w-[13px] h-3" viewBox="0 0 13 12" fill="currentColor"><path d="M4 .5v11L12.500 6zM1.500 3.500H3v5H1.500z"/></svg></button>
            <button aria-label="End"><svg class="w-3 h-3" viewBox="0 0 12 12" fill="currentColor"><path d="M1 0v12l8.500-6zM10 0h1.500v12H10z"/></svg></button>
        </div>
        <svg class="ml-[18px] w-[68px] h-[34px]" viewBox="0 0 68 34">
            <path d="M2 5l3-4M7 5l3-4M12 5l3-4" stroke="#222" stroke-width="1.800"/>
            <path d="M1 12l4-4h5q4 1 5 6v5l-3 3H1z" fill="#d0d0d0" stroke="#555"/><path d="M1 12h5q5 1 6 10l3-3" fill="none" stroke="#777" stroke-width=".8"/>
            <use href="#sketch" x="22" y="8" width="14" height="14"/>
            <path d="M43 11l3-3h9v10l-3 3h-9z" fill="#3f97d8"/><path d="M43 11l3-3h9l-3 3z" fill="#8bc9f4"/><path d="M44 22h9l3-3" fill="none" stroke="#999"/>
            <path d="M9 24v5h41v-5M29.500 24v5" fill="none" stroke="#c4c4c4" stroke-width="1.400"/>
            <path d="M56 2h11v3l-4 4v20h-2V9l-5-4z" fill="#555"/><path d="M57 9v9" stroke="#333"/>
        </svg>
        <button class="ml-auto text-[#888]" aria-label="Timeline settings"><svg class="w-[14px] h-[14px]"><use href="#gear"/></svg></button>
    </footer>

    <!-- Screen edge -->
    <div class="absolute right-0 top-[55px] bottom-[107px] w-px bg-[#05051a]"></div>
</body>
</html>
